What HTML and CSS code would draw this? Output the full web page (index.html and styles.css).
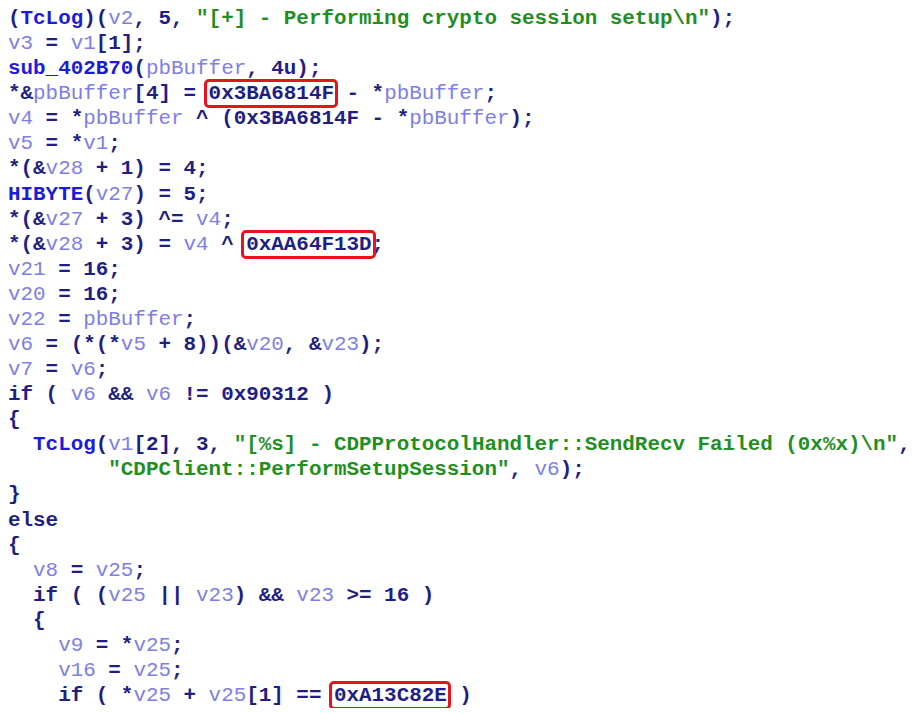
FILE: index.html
```html
<!DOCTYPE html>
<html>
<head>
<meta charset="utf-8">
<link rel="stylesheet" href="styles.css">
</head>
<body>
<pre class="code"><span class="k">(</span><span class="f">TcLog</span><span class="k">)(</span><span class="v">v2</span><span class="k">, 5, </span><span class="s">"[+] - Performing crypto session setup\n"</span><span class="k">);</span>
<span class="v">v3</span><span class="k"> = </span><span class="v">v1</span><span class="k">[1];</span>
<span class="f">sub_402B70</span><span class="k">(</span><span class="v">pbBuffer</span><span class="k">, 4u);</span>
<span class="k">*&amp;</span><span class="v">pbBuffer</span><span class="k">[4] = </span><span class="k hl">0x3BA6814F</span><span class="k"> - *</span><span class="v">pbBuffer</span><span class="k">;</span>
<span class="v">v4</span><span class="k"> = *</span><span class="v">pbBuffer</span><span class="k"> ^ (0x3BA6814F - *</span><span class="v">pbBuffer</span><span class="k">);</span>
<span class="v">v5</span><span class="k"> = *</span><span class="v">v1</span><span class="k">;</span>
<span class="k">*(&amp;</span><span class="v">v28</span><span class="k"> + 1) = 4;</span>
<span class="f">HIBYTE</span><span class="k">(</span><span class="v">v27</span><span class="k">) = 5;</span>
<span class="k">*(&amp;</span><span class="v">v27</span><span class="k"> + 3) ^= </span><span class="v">v4</span><span class="k">;</span>
<span class="k">*(&amp;</span><span class="v">v28</span><span class="k"> + 3) = </span><span class="v">v4</span><span class="k"> ^ </span><span class="k hl">0xAA64F13D</span><span class="k">;</span>
<span class="v">v21</span><span class="k"> = 16;</span>
<span class="v">v20</span><span class="k"> = 16;</span>
<span class="v">v22</span><span class="k"> = </span><span class="v">pbBuffer</span><span class="k">;</span>
<span class="v">v6</span><span class="k"> = (*(*</span><span class="v">v5</span><span class="k"> + 8))(&amp;</span><span class="v">v20</span><span class="k">, &amp;</span><span class="v">v23</span><span class="k">);</span>
<span class="v">v7</span><span class="k"> = </span><span class="v">v6</span><span class="k">;</span>
<span class="k">if ( </span><span class="v">v6</span><span class="k"> &amp;&amp; </span><span class="v">v6</span><span class="k"> != 0x90312 )</span>
<span class="k">{</span>
  <span class="f">TcLog</span><span class="k">(</span><span class="v">v1</span><span class="k">[2], 3, </span><span class="s">"[%s] - CDPProtocolHandler::SendRecv Failed (0x%x)\n"</span><span class="k">,</span>
        <span class="s">"CDPClient::PerformSetupSession"</span><span class="k">, </span><span class="v">v6</span><span class="k">);</span>
<span class="k">}</span>
<span class="k">else</span>
<span class="k">{</span>
  <span class="v">v8</span><span class="k"> = </span><span class="v">v25</span><span class="k">;</span>
  <span class="k">if ( (</span><span class="v">v25</span><span class="k"> || </span><span class="v">v23</span><span class="k">) &amp;&amp; </span><span class="v">v23</span><span class="k"> &gt;= 16 )</span>
  <span class="k">{</span>
    <span class="v">v9</span><span class="k"> = *</span><span class="v">v25</span><span class="k">;</span>
    <span class="v">v16</span><span class="k"> = </span><span class="v">v25</span><span class="k">;</span>
    <span class="k">if ( *</span><span class="v">v25</span><span class="k"> + </span><span class="v">v25</span><span class="k">[1] == </span><span class="k hl">0xA13C82E</span><span class="k"> )</span></pre>
</body>
</html>
```

FILE: styles.css
```css
html, body {
  margin: 0;
  padding: 0;
  background: #ffffff;
  overflow: hidden;
}

.code {
  margin: 0;
  padding: 6px 0 0 8px;
  font-family: "Liberation Mono", "Courier New", monospace;
  font-size: 20.9px;
  line-height: 25.08px;
  color: #1a1a80;
  white-space: pre;
}

.k {
  color: #1e1e84;
  font-weight: bold;
}

.f {
  color: #1c1cd8;
  font-weight: bold;
}

.v {
  color: #7e7ee8;
  font-weight: normal;
}

.s {
  color: #1f8f1f;
  font-weight: bold;
}

.hl {
  padding: 1px 2px 1px 3px;
  margin: 0 -2px 0 -3px;
  outline: 3px solid #e8141c;
  outline-offset: -1px;
  border-radius: 3px;
}
```
